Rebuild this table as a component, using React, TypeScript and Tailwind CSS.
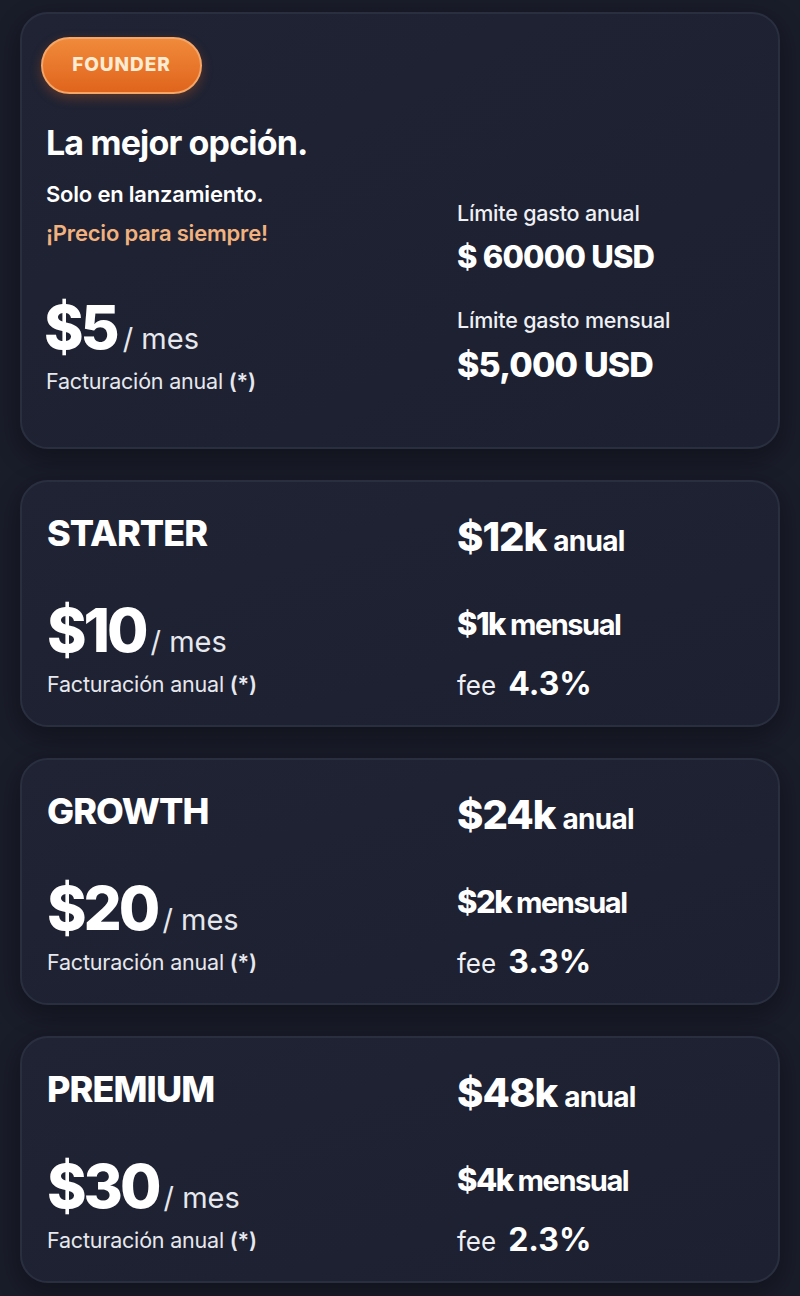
import React from 'react';

type Plan = {
  name: string;
  price: string;
  annual: string;
  monthly: string;
  fee: string;
};

const plans: Plan[] = [
  { name: 'STARTER', price: '$10', annual: '$12k', monthly: '$1k', fee: '4.3%' },
  { name: 'GROWTH', price: '$20', annual: '$24k', monthly: '$2k', fee: '3.3%' },
  { name: 'PREMIUM', price: '$30', annual: '$48k', monthly: '$4k', fee: '2.3%' },
];

const card =
  'rounded-[28px] border-2 border-[#2a2f40] bg-gradient-to-br from-[#1f2334] to-[#1c2030] shadow-[0_8px_24px_rgba(0,0,0,0.35)]';

const Billing = () => (
  <div className="text-[21.5px] leading-[28px] text-[#e6e8ee] tracking-[-0.2px]">
    Facturación anual <span className="font-semibold">(*)</span>
  </div>
);

const PlanCard = ({ plan }: { plan: Plan }) => (
  <section className={`${card} h-[247px] flex`}>
    <div className="w-[435px] pl-[25px] pt-[32px] flex flex-col">
      <h2 className="text-[36px] leading-[38px] font-extrabold tracking-tight text-white">{plan.name}</h2>
      <div className="mt-[47px] flex items-baseline">
        <span className="text-[60px] leading-[62px] font-extrabold tracking-tighter text-white">{plan.price}</span>
        <span className="ml-[5px] text-[29px] text-[#e6e8ee]">/ mes</span>
      </div>
      <div className="mt-[6px]">
        <Billing />
      </div>
    </div>
    <div className="flex-1 pt-[35px] flex flex-col">
      <div className="flex items-baseline h-[40px]">
        <span className="text-[40px] leading-[40px] font-extrabold tracking-tight text-white">{plan.annual}</span>
        <span className="ml-[7px] text-[28px] font-bold tracking-tight text-white">anual</span>
      </div>
      <div className="mt-[52px] flex items-baseline h-[30px]">
        <span className="text-[31px] leading-[30px] font-extrabold tracking-tighter text-white">{plan.monthly}</span>
        <span className="ml-[5px] text-[29px] leading-[30px] font-bold tracking-tighter text-white">mensual</span>
      </div>
      <div className="mt-[29px] flex items-baseline h-[32px]">
        <span className="text-[26px] leading-[32px] text-[#eef0f4]">fee</span>
        <span className="ml-[12px] text-[32px] leading-[32px] font-bold text-white">{plan.fee}</span>
      </div>
    </div>
  </section>
);

export default function App() {
  return (
    <div
      className="min-h-[1296px] w-[800px] bg-[#191c29] px-[20px] pt-[12px] pb-[14px] flex flex-col gap-[31px]"
      style={{ fontFamily: 'Inter, "Noto Sans", sans-serif' }}
    >
      {/* Founder */}
      <section className={`${card} h-[437px] flex`}>
        <div className="w-[435px] pl-[19px] pt-[23px] flex flex-col">
          <div className="w-[161px] h-[57px] rounded-full border-2 border-[#f5a565] bg-gradient-to-b from-[#f08a3a] to-[#e0641c] flex items-center justify-center shadow-[0_4px_12px_rgba(224,100,28,0.3)]">
            <span className="text-[19px] font-extrabold tracking-wider text-[#fdebd2]">FOUNDER</span>
          </div>
          <h1 className="mt-[30px] ml-[5px] text-[34px] leading-[38px] font-bold tracking-tight text-white">
            La mejor opción.
          </h1>
          <p className="mt-[19px] ml-[5px] text-[22px] leading-[26px] font-semibold tracking-[-0.2px] text-white">
            Solo en lanzamiento.
          </p>
          <p className="mt-[13px] ml-[5px] text-[22px] leading-[26px] font-semibold tracking-[-0.2px] text-[#f1b27f]">
            ¡Precio para siempre!
          </p>
          <div className="mt-[51px] ml-[3px] flex items-baseline">
            <span className="text-[60px] leading-[60px] font-extrabold tracking-tighter text-white">$5</span>
            <span className="ml-[6px] text-[29px] text-[#e6e8ee]">/ mes</span>
          </div>
          <div className="mt-[6px] ml-[5px]">
            <Billing />
          </div>
        </div>
        <div className="flex-1 pt-[185px] flex flex-col">
          <div className="text-[21.5px] leading-[28px] font-medium tracking-[-0.2px] text-[#eef0f4]">Límite gasto anual</div>
          <div className="mt-[12px] text-[31px] leading-[36px] font-extrabold tracking-tight text-white">$ 60000 USD</div>
          <div className="mt-[31px] text-[21.5px] leading-[28px] font-medium tracking-[-0.2px] text-[#eef0f4]">Límite gasto mensual</div>
          <div className="mt-[12px] text-[34px] leading-[38px] font-extrabold tracking-tight text-white">$5,000 USD</div>
        </div>
      </section>

      {plans.map((p) => (
        <PlanCard key={p.name} plan={p} />
      ))}
    </div>
  );
}
